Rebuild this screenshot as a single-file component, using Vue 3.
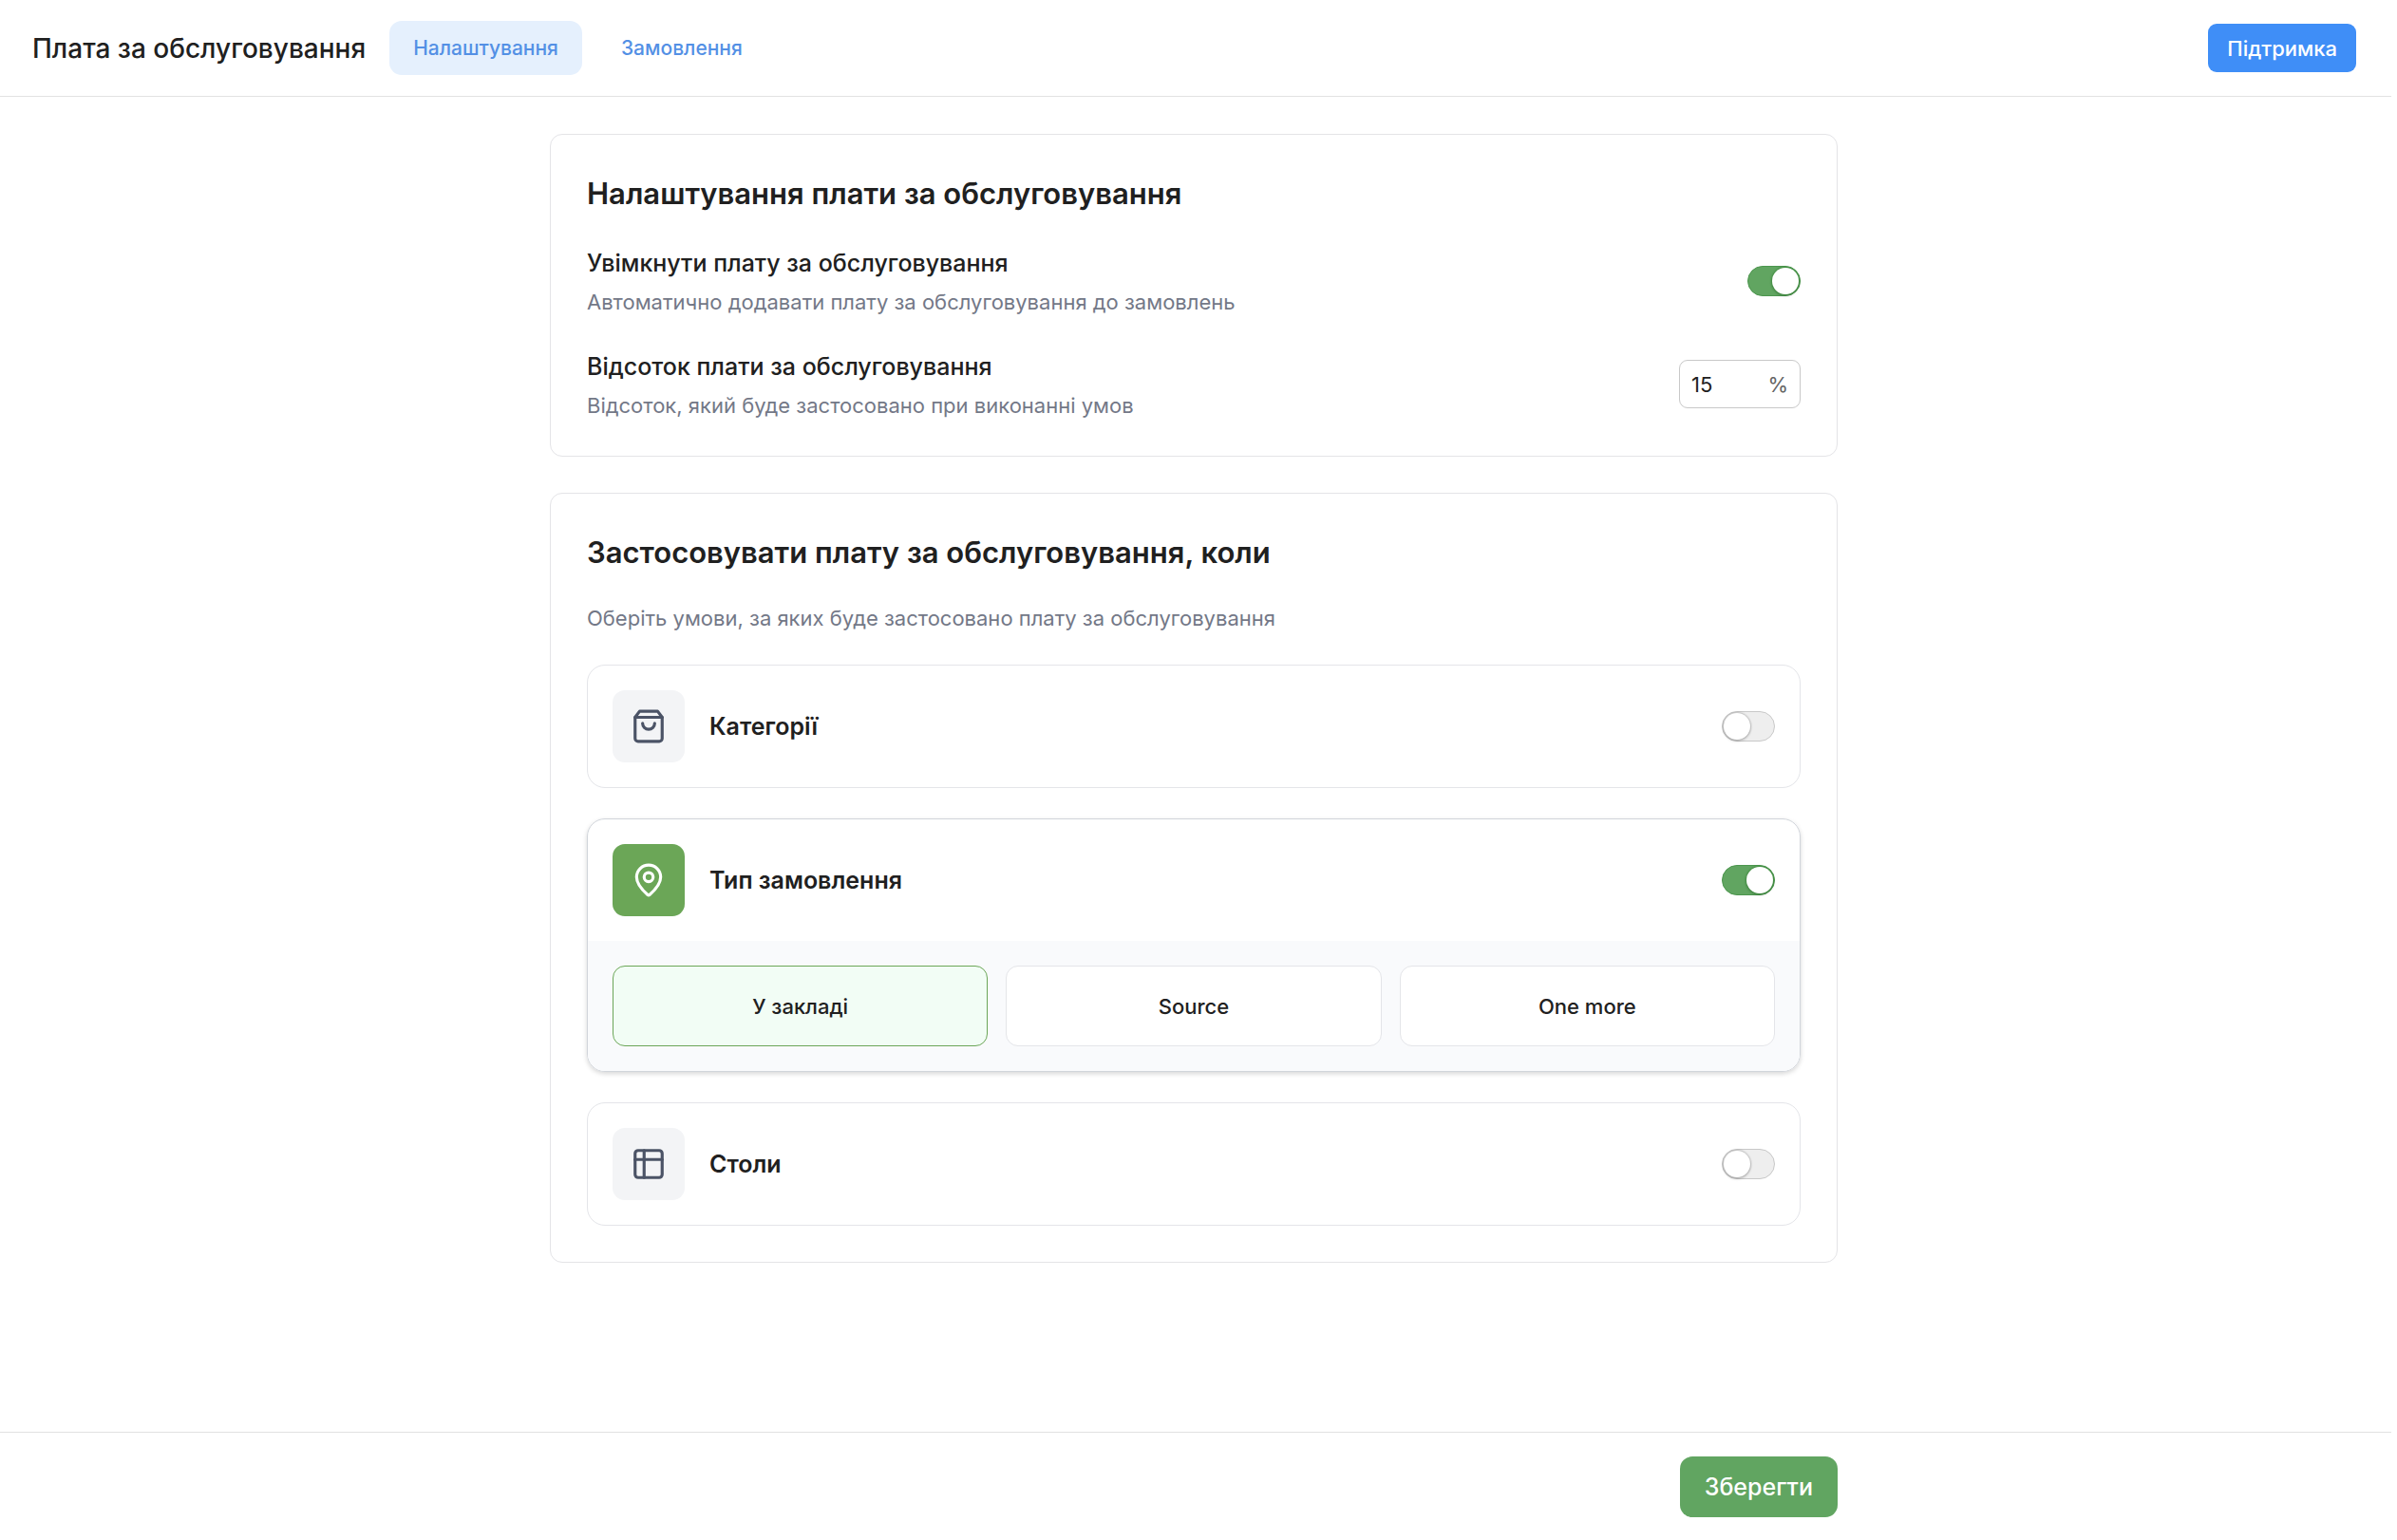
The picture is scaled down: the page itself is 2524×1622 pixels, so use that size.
<template>
  <div class="page">
    <header class="topbar">
      <h1 class="topbar-title">Плата за обслуговування</h1>
      <nav class="tabs">
        <a
          v-for="tab in tabs"
          :key="tab.id"
          :href="'#' + tab.id"
          class="tab"
          :class="{ active: tab.id === activeTab }"
          @click.prevent="activeTab = tab.id"
        >{{ tab.label }}</a>
      </nav>
      <button type="button" class="support-btn">Підтримка</button>
    </header>

    <main class="content">
      <section class="card">
        <h2 class="card-title">Налаштування плати за обслуговування</h2>

        <div class="setting">
          <div>
            <label class="setting-label" for="fee-enabled">Увімкнути плату за обслуговування</label>
            <p class="hint">Автоматично додавати плату за обслуговування до замовлень</p>
          </div>
          <input id="fee-enabled" v-model="enabled" type="checkbox" class="switch" />
        </div>

        <div class="setting">
          <div>
            <label class="setting-label" for="fee-percent">Відсоток плати за обслуговування</label>
            <p class="hint">Відсоток, який буде застосовано при виконанні умов</p>
          </div>
          <div class="percent">
            <input id="fee-percent" v-model="percent" type="text" inputmode="numeric" class="percent-input" />
            <span class="percent-sign">%</span>
          </div>
        </div>
      </section>

      <section class="card">
        <h2 class="card-title">Застосовувати плату за обслуговування, коли</h2>
        <p class="hint">Оберіть умови, за яких буде застосовано плату за обслуговування</p>

        <div class="conditions">
          <article
            v-for="item in conditions"
            :key="item.id"
            class="condition"
            :class="{ active: item.enabled }"
          >
            <div class="condition-head">
              <span class="condition-icon">
                <svg viewBox="0 0 24 24" aria-hidden="true">
                  <template v-if="item.id === 'categories'">
                    <path d="M6 2 3 6v14a2 2 0 0 0 2 2h14a2 2 0 0 0 2-2V6l-3-4Z" />
                    <path d="M3 6h18" />
                    <path d="M16 10a4 4 0 0 1-8 0" />
                  </template>
                  <template v-else-if="item.id === 'order-type'">
                    <path d="M20 10c0 4.993-5.539 10.193-7.399 11.799a1 1 0 0 1-1.202 0C9.539 20.193 4 14.993 4 10a8 8 0 0 1 16 0" />
                    <circle cx="12" cy="10" r="3" />
                  </template>
                  <template v-else>
                    <rect x="3" y="3" width="18" height="18" rx="2" />
                    <path d="M3 9h18" />
                    <path d="M9 3v18" />
                  </template>
                </svg>
              </span>
              <label class="condition-name" :for="item.id">{{ item.label }}</label>
              <input :id="item.id" v-model="item.enabled" type="checkbox" class="switch" />
            </div>

            <div v-if="item.enabled && item.options" class="options">
              <button
                v-for="option in item.options"
                :key="option"
                type="button"
                class="option"
                :class="{ selected: option === orderType }"
                @click="orderType = option"
              >{{ option }}</button>
            </div>
          </article>
        </div>
      </section>
    </main>

    <footer class="footer">
      <div class="footer-inner">
        <button type="button" class="save-btn">Зберегти</button>
      </div>
    </footer>
  </div>
</template>

<script setup>
import { ref } from 'vue'

const tabs = [
  { id: 'settings', label: 'Налаштування' },
  { id: 'orders', label: 'Замовлення' }
]

const activeTab = ref('settings')
const enabled = ref(true)
const percent = ref('15')
const orderType = ref('У закладі')

const conditions = ref([
  { id: 'categories', label: 'Категорії', enabled: false },
  {
    id: 'order-type',
    label: 'Тип замовлення',
    enabled: true,
    options: ['У закладі', 'Source', 'One more']
  },
  { id: 'tables', label: 'Столи', enabled: false }
])
</script>

<style>
body {
  margin: 0;
  background: #fff;
}
</style>

<style scoped>
.page {
  display: flex;
  flex-direction: column;
  box-sizing: border-box;
  min-height: 100vh;
  padding-right: 6px;
  color: #202020;
  font-family: Inter, "Liberation Sans", sans-serif;
}

.page *,
.page *::before {
  box-sizing: border-box;
}

h1,
h2,
p {
  margin: 0;
}

button,
input {
  font-family: inherit;
}

button {
  cursor: pointer;
}

.topbar {
  display: flex;
  align-items: center;
  height: 102px;
  padding: 0 37px 0 34px;
  border-bottom: 1px solid #e2e2e2;
}

.topbar-title {
  font-size: 28px;
  font-weight: 500;
  line-height: 40px;
}

.tabs {
  display: flex;
  gap: 16px;
  margin-left: 25px;
}

.tab {
  padding: 0 25px;
  border-radius: 13px;
  color: #5390e5;
  font-size: 21px;
  font-weight: 500;
  line-height: 57px;
  text-decoration: none;
}

.tab.active {
  background: #e5f0fd;
}

.support-btn {
  height: 51px;
  margin-left: auto;
  padding: 0 20px;
  border: 0;
  border-radius: 9px;
  background: #3f8ef7;
  color: #fff;
  font-size: 22px;
  font-weight: 500;
}

.content {
  display: flex;
  flex: 1;
  flex-direction: column;
  align-items: center;
  gap: 38px;
  padding: 39px 4px 38px 0;
}

.card {
  width: 100%;
  max-width: 1356px;
  padding: 38px;
  border: 1px solid #e4e4e7;
  border-radius: 13px;
  background: #fff;
}

.card-title {
  margin-bottom: 30px;
  font-size: 31px;
  font-weight: 600;
  line-height: 48px;
}

.setting {
  display: flex;
  align-items: center;
  justify-content: space-between;
}

.setting + .setting {
  margin-top: 34px;
}

.setting-label {
  display: block;
  margin-bottom: 7px;
  font-size: 25px;
  font-weight: 500;
  line-height: 38px;
}

.hint {
  color: #737887;
  font-size: 22px;
  line-height: 30px;
}

.switch {
  flex: none;
  width: 56px;
  height: 32px;
  margin: 0;
  padding: 1px;
  border: 1px solid #c8c8c8;
  border-radius: 16px;
  appearance: none;
  background: #eee;
  cursor: pointer;
}

.switch::before {
  display: block;
  width: 28px;
  height: 28px;
  border-radius: 50%;
  background: #fff;
  box-shadow: 0 0 2px 1px rgba(0, 0, 0, 0.2), 0 2px 3px rgba(0, 0, 0, 0.12);
  content: "";
}

.switch:checked {
  border-color: #4c964e;
  background: #61a561;
}

.switch:checked::before {
  margin-left: 24px;
  box-shadow: 0 0 2px 1px rgba(20, 110, 20, 0.4), 0 2px 3px rgba(0, 0, 0, 0.12);
}

.percent {
  display: flex;
  align-items: center;
  width: 128px;
  height: 51px;
  padding: 0 12px;
  border: 1px solid #c8c8c8;
  border-radius: 9px;
}

.percent-input {
  flex: 1;
  min-width: 0;
  padding: 0;
  border: 0;
  outline: 0;
  background: none;
  color: #202020;
  font-size: 22px;
}

.percent-sign {
  color: #646464;
  font-size: 22px;
}

.conditions {
  display: grid;
  gap: 32px;
  margin-top: 34px;
}

.condition {
  overflow: hidden;
  border: 1px solid #e4e5e9;
  border-radius: 19px;
}

.condition.active {
  border-color: #d1d5db;
  box-shadow: 0 2px 5px rgba(0, 0, 0, 0.16);
}

.condition-head {
  display: flex;
  align-items: center;
  gap: 26px;
  padding: 26px;
}

.condition-icon {
  display: grid;
  place-items: center;
  width: 76px;
  height: 76px;
  border-radius: 13px;
  background: #f3f4f6;
  color: #4b5366;
}

.condition-icon svg {
  width: 38px;
  height: 38px;
  fill: none;
  stroke: currentColor;
  stroke-width: 2;
  stroke-linecap: round;
  stroke-linejoin: round;
}

.condition.active .condition-icon {
  background: #6ba657;
  color: #fff;
}

.condition-name {
  flex: 1;
  font-size: 25px;
  font-weight: 600;
  line-height: 38px;
}

.options {
  display: grid;
  grid-template-columns: repeat(3, 1fr);
  gap: 19px;
  padding: 26px;
  background: #f9fafc;
}

.option {
  height: 85px;
  border: 1px solid #e4e5e9;
  border-radius: 13px;
  background: #fff;
  color: #202020;
  font-size: 22px;
  font-weight: 500;
}

.option.selected {
  border-color: #6ba657;
  background: #f2fdf5;
}

.footer {
  padding: 25px 4px 24px 0;
  border-top: 1px solid #e2e2e2;
}

.footer-inner {
  display: flex;
  justify-content: flex-end;
  max-width: 1356px;
  margin: 0 auto;
}

.save-btn {
  height: 64px;
  padding: 0 26px;
  border: 0;
  border-radius: 13px;
  background: #61a561;
  color: #fff;
  font-size: 25px;
  font-weight: 500;
}
</style>
